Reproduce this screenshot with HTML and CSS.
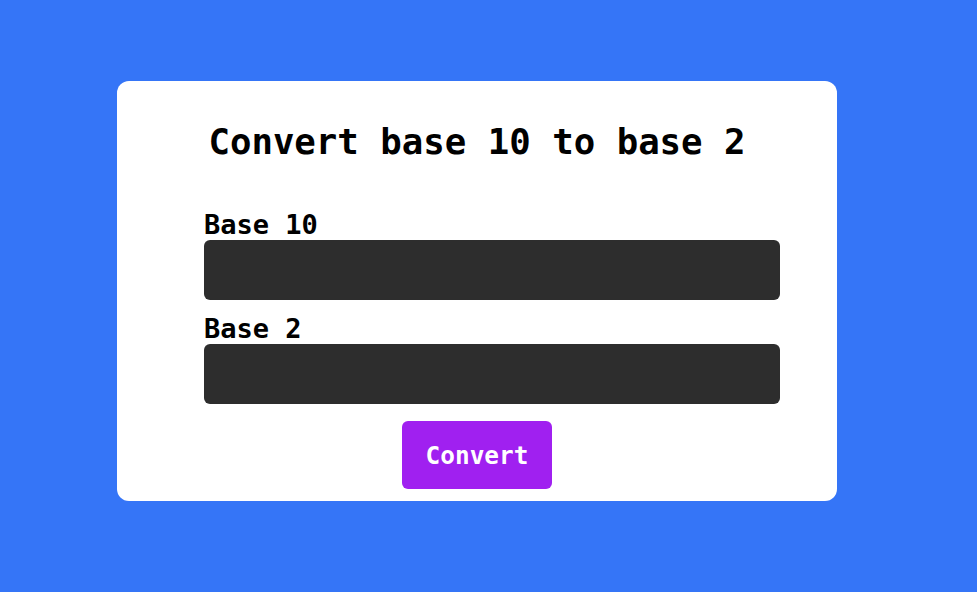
FILE: index.html
```html
<!DOCTYPE html>
<html>
<head>
<meta charset="utf-8">
<link rel="stylesheet" href="styles.css">
</head>
<body>
<main class="page">
  <section class="card">
    <h1 class="title">Convert base 10 to base 2</h1>
    <form class="form">
      <label class="label" for="b10">Base 10</label>
      <input class="field" id="b10" type="text">
      <label class="label label-second" for="b2">Base 2</label>
      <input class="field" id="b2" type="text">
      <button class="btn" type="button">Convert</button>
    </form>
  </section>
</main>
</body>
</html>
```

FILE: styles.css
```css
* { box-sizing: border-box; }
html, body {
  margin: 0;
  padding: 0;
  height: 100%;
}
body {
  background: #3575f7;
  font-family: "DejaVu Sans Mono", monospace;
}
.page {
  display: flex;
  justify-content: center;
  padding-top: 81px;
}
.card {
  width: 720px;
  height: 420px;
  margin-right: 23px;
  background: #ffffff;
  border-radius: 12px;
  padding: 40px 0 12px;
  display: flex;
  flex-direction: column;
  align-items: center;
}
.title {
  margin: 0;
  font-size: 35.7px;
  line-height: 41px;
  font-weight: bold;
  color: #000;
}
.form {
  width: 100%;
  display: flex;
  flex-direction: column;
  padding: 0 57px 0 87px;
  margin-top: 47px;
}
.label {
  font-size: 27px;
  line-height: 31px;
  font-weight: bold;
  color: #000;
}
.label-second {
  margin-top: 13px;
}
.field {
  height: 60px;
  width: 100%;
  background: #2d2d2d;
  border: none;
  border-radius: 6px;
  margin: 0;
  padding: 0 12px;
  color: #fff;
  font-family: inherit;
}
.btn {
  align-self: center;
  margin-top: 17px;
  margin-left: -30px;
  width: 150px;
  height: 68px;
  background: #a020f0;
  border: none;
  border-radius: 6px;
  color: #fff;
  font-family: "DejaVu Sans Mono", monospace;
  font-weight: bold;
  font-size: 24.4px;
}
```
